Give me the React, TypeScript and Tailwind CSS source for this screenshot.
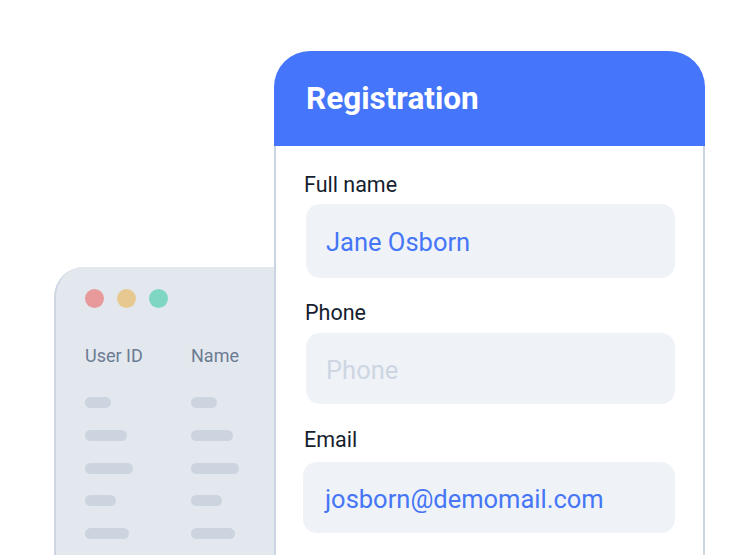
import React from "react";

const bars = [26, 42, 48, 31, 44];

const Field = ({
  label,
  value,
  placeholder,
  labelClass,
  boxClass,
}: {
  label: string;
  value?: string;
  placeholder?: string;
  labelClass: string;
  boxClass: string;
}) => (
  <div>
    <div className={`text-[21.5px] leading-[24px] text-[#161e2e] ${labelClass}`}>{label}</div>
    <div
      className={`rounded-[14px] bg-[#eff3f8] pl-[20px] pt-[3px] flex items-center text-[25.5px] ${boxClass}`}
    >
      {value ? (
        <span className="text-[#4676f6]">{value}</span>
      ) : (
        <span className="text-[#cdd6e2]">{placeholder}</span>
      )}
    </div>
  </div>
);

export default function App() {
  return (
    <div
      className="relative w-[744px] h-[555px] overflow-hidden bg-white"
      style={{ fontFamily: "Roboto, 'Liberation Sans', sans-serif" }}
    >
      {/* back window: user table */}
      <div className="absolute left-[54px] top-[267px] w-[260px] h-[320px] rounded-tl-[30px] border-l-2 border-[#cdd6e1] bg-[#e3e8ef] pl-[29px] pt-[22px]">
        <div className="flex gap-[13px]">
          <span className="w-[19px] h-[19px] rounded-full bg-[#e89a9b]" />
          <span className="w-[19px] h-[19px] rounded-full bg-[#e7c891]" />
          <span className="w-[19px] h-[19px] rounded-full bg-[#80d7c1]" />
        </div>
        <div className="flex mt-[36px]">
          {["User ID", "Name"].map((col) => (
            <div key={col} className="w-[106px]">
              <div className="text-[18px] leading-[24px] text-[#6c7b92]">{col}</div>
              <div className="flex flex-col gap-[21.75px] mt-[29px]">
                {bars.map((w, i) => (
                  <span
                    key={i}
                    className="h-[11px] rounded-full bg-[#cbd4df]"
                    style={{ width: w }}
                  />
                ))}
              </div>
            </div>
          ))}
        </div>
      </div>

      {/* front window: registration form */}
      <div className="absolute left-[274px] top-[51px] w-[431px] h-[560px]">
        <div className="h-[95px] rounded-t-[36px] bg-[#4575fb] flex items-center pl-[32px]">
          <span className="text-white text-[31.5px] font-bold">Registration</span>
        </div>
        <div className="h-full border-x-2 border-[#cbd5e1] bg-white pl-[28px] pt-[27px]">
          <Field
            label="Full name"
            value="Jane Osborn"
            labelClass=""
            boxClass="ml-[2px] mt-[7px] h-[74px] w-[369px]"
          />
          <div className="mt-[23px]">
            <Field
              label="Phone"
              placeholder="Phone"
              labelClass="pl-[1px]"
              boxClass="ml-[2px] mt-[8px] h-[71px] w-[369px]"
            />
          </div>
          <div className="mt-[24px]">
            <Field
              label="Email"
              value="josborn@demomail.com"
              labelClass=""
              boxClass="-ml-[1px] mt-[10px] h-[71px] w-[372px] pl-[22px]"
            />
          </div>
        </div>
      </div>
    </div>
  );
}
